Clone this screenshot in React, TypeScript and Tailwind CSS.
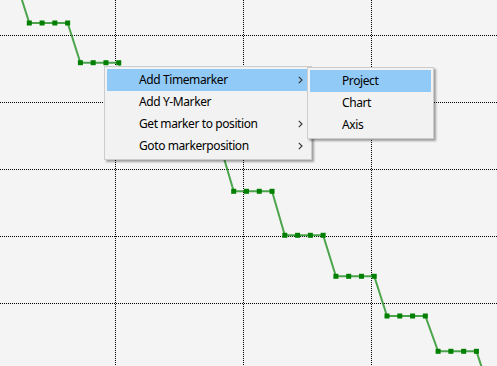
import React from 'react';

const groupY = [-17, 23, 62.7, 105, 148, 191.3, 235.3, 276.3, 316, 351.3, 390];

const points: [number, number][] = [];
groupY.forEach((y, i) => {
  const g = i - 1;
  const xs = 29.3 + 51.1 * g;
  for (let k = 0; k < 4; k++) points.push([xs + 12.78 * k, y]);
});

const Chevron = () => (
  <svg width="5" height="8" viewBox="0 0 5 8" className="block">
    <path d="M0.8 0.8 L4 4 L0.8 7.2" fill="none" stroke="#333" strokeWidth="1.1" />
  </svg>
);

interface ItemProps {
  label: string;
  active?: boolean;
  sub?: boolean;
}

const MenuItem: React.FC<ItemProps> = ({ label, active, sub }) => (
  <div
    className={[
      "h-[22px]",
      "flex",
      "items-center",
      "pl-8",
      "pr-[6px]",
      active ? "bg-[#91c9f7]" : "",
    ].join(" ")}
  >
    <span className="flex-1 text-[12px] tracking-[-0.4px] text-black leading-none">{label}</span>
    {sub && <Chevron />}
  </div>
);

const Chart = () => (
  <svg width="497" height="366" className="absolute inset-0">
    {[115.5, 243.5, 371.5].map((x) => (
      <line key={x} x1={x} y1={0} x2={x} y2={366} stroke="#000" strokeDasharray="1 1" shapeRendering="crispEdges" />
    ))}
    {[35.5, 102.5, 169.5, 236.5, 303.5].map((y) => (
      <line key={y} x1={0} y1={y} x2={497} y2={y} stroke="#000" strokeDasharray="1 1" shapeRendering="crispEdges" />
    ))}
    <polyline
      points={points.map((p) => p.join(",")).join(" ")}
      fill="none"
      stroke="#2e962e"
      strokeWidth="2"
      strokeOpacity="0.85"
    />
    {points.map(([x, y], i) => (
      <rect key={i} x={x - 2.5} y={y - 2.5} width="5" height="5" fill="#007f00" />
    ))}
  </svg>
);

export default function App() {
  return (
    <div
      className="relative w-[497px] h-[366px] overflow-hidden bg-[#f4f4f4]"
      style={{ fontFamily: '"Noto Sans", "Open Sans", sans-serif' }}
    >
      <Chart />

      {/* main context menu */}
      <div className="absolute left-[104px] top-[66px] w-[208px] border border-[#cccccc] bg-[#f2f2f2] p-[2px] shadow-[2px_2px_2px_rgba(0,0,0,0.35)]">
        <MenuItem label="Add Timemarker" active sub />
        <MenuItem label="Add Y-Marker" />
        <MenuItem label="Get marker to position" sub />
        <MenuItem label="Goto markerposition" sub />
      </div>

      {/* submenu */}
      <div className="absolute left-[307px] top-[67px] w-[127px] border border-[#cccccc] bg-[#f2f2f2] p-[2px] shadow-[2px_2px_2px_rgba(0,0,0,0.35)]">
        <MenuItem label="Project" active />
        <MenuItem label="Chart" />
        <MenuItem label="Axis" />
      </div>
    </div>
  );
}
